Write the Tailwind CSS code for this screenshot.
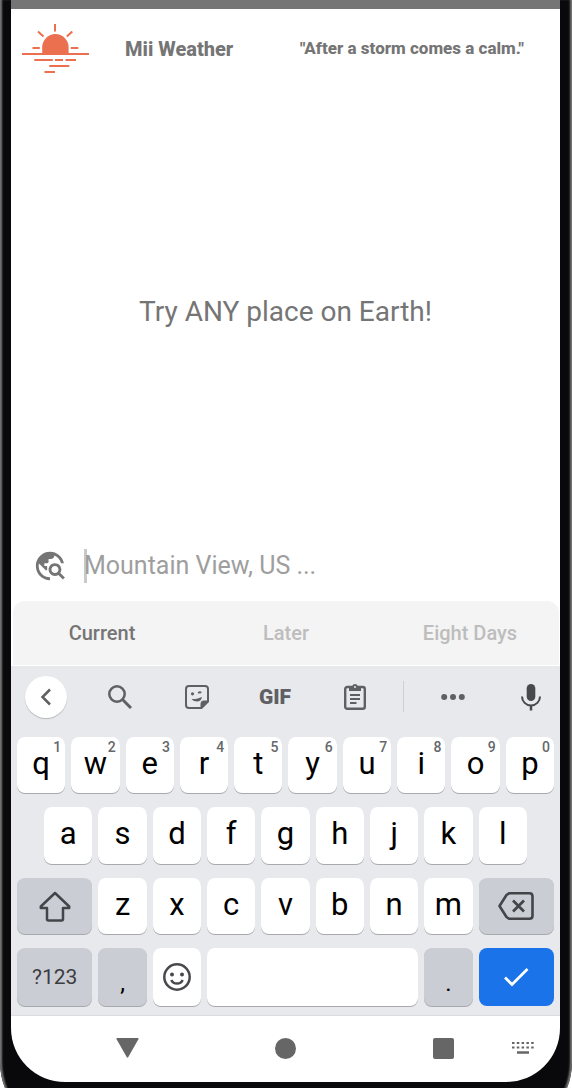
<!DOCTYPE html>
<html lang="en">
<head>
<meta charset="utf-8">
<meta name="viewport" content="width=device-width, initial-scale=1">
<title>Mii Weather</title>
<script src="https://cdn.jsdelivr.net/npm/@tailwindcss/browser@4"></script>
</head>
<body class="h-screen overflow-hidden bg-white font-['Roboto',sans-serif]">
<div class="h-[calc(100vh+44px)] rounded-b-[70px] bg-[#09090b] shadow-[inset_3px_0_2px_-1px_#777,inset_-3px_0_2px_-1px_#777]">
<div class="mr-3 ml-[11px] flex h-[calc(100vh-6px)] flex-col overflow-hidden rounded-b-[54px] bg-white">
  <div class="h-[9px] shrink-0 bg-[#757575]"></div>

  <header class="flex h-20 shrink-0 items-center pr-9 pl-[11px] text-[#757575]">
    <svg class="h-[51px] w-[67px] shrink-0" viewBox="22 24 67 51" fill="none" stroke="#ea7050" stroke-width="2" aria-hidden="true">
      <path d="M42.2 54V47.3a13.2 13.2 0 0 1 26.4 0V54z" fill="#ea7050" stroke="none"/>
      <path d="M55 23.5v8M38 31.5l5.500 5M72.300 31.500l-5.500 5M32.500 48h7.300M70.800 48h7.500M22 54h67M34.300 60h18.500M55 60h8M65.500 60h10.500M49.300 66h20M44.500 72h10.500"/>
    </svg>
    <h1 class="ml-9 text-xl font-extrabold">Mii Weather</h1>
    <p class="ml-auto text-[17px] font-extrabold whitespace-nowrap">"After a storm comes a calm."</p>
  </header>

  <main class="flex min-h-0 flex-1 items-center justify-center pt-1 text-[28px] text-[#757575]">
    <p>Try ANY place on Earth!</p>
  </main>

  <form class="flex h-[70px] shrink-0 items-center pl-[22px]">
    <svg class="size-[34px] shrink-0" viewBox="0 0 24 24" fill="#757575" aria-hidden="true"><path d="M19.3 16.9c.4-.7.7-1.5.7-2.4 0-2.5-2-4.5-4.500-4.500S11 12 11 14.500s2 4.500 4.500 4.500c.9 0 1.700-.3 2.400-.7l3.200 3.200 1.400-1.400-3.200-3.200zm-3.800.1c-1.400 0-2.500-1.100-2.500-2.500s1.100-2.500 2.500-2.500 2.500 1.100 2.500 2.500-1.100 2.500-2.500 2.500zM12 20v2C6.480 22 2 17.520 2 12S6.480 2 12 2c4.840 0 8.870 3.440 9.800 8h-2.070A8 8 0 0 0 15 4.590V5c0 1.100-.9 2-2 2h-2v2c0 .55-.45 1-1 1H8v2h2v3H9l-4.790-4.790C4.080 10.790 4 11.380 4 12c0 4.410 3.590 8 8 8z"/></svg>
    <div class="relative ml-[17px] flex-1">
      <span class="absolute inset-y-0 left-0 w-[3px] bg-[#c9c9c9]"></span>
      <input type="text" aria-label="Place" placeholder="Mountain View, US ..." class="relative block h-[34px] w-full bg-transparent text-[25px] text-[#757575] outline-none placeholder:text-[#9e9e9e]">
    </div>
  </form>

  <nav class="mx-0.5 mr-px grid h-16 shrink-0 grid-cols-[89fr_95fr_89fr] rounded-t-xl bg-[#f4f4f4] text-xl font-medium text-[#bdbdbd]" aria-label="Forecast">
    <button type="button" class="text-[#757575]">Current</button>
    <button type="button">Later</button>
    <button type="button">Eight Days</button>
  </nav>

  <section class="mt-px h-[350px] shrink-0 border-b border-[#dcdcdf] bg-[#e8e9ed]" aria-label="Keyboard">
    <div class="grid h-[61px] grid-cols-[70fr_77fr_78fr_78fr_89fr_1px_98fr_58fr] items-center justify-items-center text-[#5f6063]">
      <button type="button" aria-label="Back" class="grid size-[42px] place-items-center rounded-full bg-white shadow-[0_1px_1px_#b5b6ba]">
        <svg class="size-6" viewBox="0 0 24 24" fill="none" stroke="currentColor" stroke-width="2.500"><path d="M16 4.500 8.500 12l7.500 7.500"/></svg>
      </button>
      <button type="button" aria-label="Search">
        <svg class="size-6" viewBox="0 0 24 24" fill="none" stroke="currentColor"><circle cx="9" cy="9" r="7.700" stroke-width="2.500"/><path d="m14.500 14.500 8.500 8.500" stroke-width="3"/></svg>
      </button>
      <button type="button" aria-label="Stickers">
        <svg class="size-6" viewBox="0 0 24 24" fill="none" stroke="currentColor" stroke-width="2"><path d="M4 1h16a3 3 0 0 1 3 3v12.500L16.500 23H4a3 3 0 0 1-3-3V4a3 3 0 0 1 3-3z"/><path d="M23 16h-4.500a2.500 2.500 0 0 0-2.500 2.500V23z" fill="currentColor" stroke-width="1"/><path d="M6.500 14c3.500.3 7.500-.5 10.500-2-.5 3-2.500 4.500-5 4.500-2.200 0-4-.8-5.500-2.500z" fill="currentColor" stroke="none"/><circle cx="7.500" cy="8.800" r="1.600" fill="currentColor" stroke="none"/><path d="M12.700 7.500c1-1.400 2.800-1.700 4-.4l-.6 1.200-3 .3z" fill="currentColor" stroke="none"/></svg>
      </button>
      <button type="button" class="text-[21px] leading-6 font-black">GIF</button>
      <button type="button" aria-label="Clipboard" class="mr-2">
        <svg class="h-[27px] w-[22px]" viewBox="0 0 22 27" fill="none" stroke="currentColor"><rect x="1.200" y="4" width="19.600" height="21.800" rx="2" stroke-width="2.400"/><path d="M5 3h3.200a3 3 0 0 1 5.600 0H17v5H5z" fill="currentColor" stroke="none"/><circle cx="11" cy="4" r="1" fill="#e8e9ed" stroke="none"/><path d="M6 12h10M6 16h10M6 20h6.500" stroke-width="2"/></svg>
      </button>
      <span class="h-[31px] w-px bg-[#cfd0d4]"></span>
      <button type="button" aria-label="More">
        <svg class="h-2 w-6" viewBox="0 0 24 8" fill="currentColor"><circle cx="3.200" cy="4" r="3"/><circle cx="12" cy="4" r="3"/><circle cx="20.800" cy="4" r="3"/></svg>
      </button>
      <button type="button" aria-label="Voice input" class="text-[#48494c]">
        <svg class="h-7 w-5" viewBox="0 0 20 28" fill="none" stroke="currentColor" stroke-width="2"><rect x="5.700" y="1" width="8.600" height="17" rx="4.300" fill="currentColor" stroke="none"/><path d="M1 13.500a9 9 0 0 0 18 0"/><path d="M10 22v5.500" stroke-width="2.500"/></svg>
      </button>
    </div>

    <div class="mx-1.5 mt-2.5 grid grid-cols-20 grid-rows-[56px_57px_56px_58px] gap-x-1.5 gap-y-3.5 text-[31px] leading-none text-black *:relative *:col-span-2 *:rounded-lg *:bg-white *:pb-1 *:shadow-[0_1px_0_#a8a9ad]">
      <button type="button">q<sup class="absolute top-[3px] right-1 text-sm leading-none font-medium text-[#66676a]">1</sup></button>
      <button type="button">w<sup class="absolute top-[3px] right-1 text-sm leading-none font-medium text-[#66676a]">2</sup></button>
      <button type="button">e<sup class="absolute top-[3px] right-1 text-sm leading-none font-medium text-[#66676a]">3</sup></button>
      <button type="button">r<sup class="absolute top-[3px] right-1 text-sm leading-none font-medium text-[#66676a]">4</sup></button>
      <button type="button">t<sup class="absolute top-[3px] right-1 text-sm leading-none font-medium text-[#66676a]">5</sup></button>
      <button type="button">y<sup class="absolute top-[3px] right-1 text-sm leading-none font-medium text-[#66676a]">6</sup></button>
      <button type="button">u<sup class="absolute top-[3px] right-1 text-sm leading-none font-medium text-[#66676a]">7</sup></button>
      <button type="button">i<sup class="absolute top-[3px] right-1 text-sm leading-none font-medium text-[#66676a]">8</sup></button>
      <button type="button">o<sup class="absolute top-[3px] right-1 text-sm leading-none font-medium text-[#66676a]">9</sup></button>
      <button type="button">p<sup class="absolute top-[3px] right-1 text-sm leading-none font-medium text-[#66676a]">0</sup></button>

      <button type="button" class="col-start-2!">a</button>
      <button type="button">s</button>
      <button type="button">d</button>
      <button type="button">f</button>
      <button type="button">g</button>
      <button type="button">h</button>
      <button type="button">j</button>
      <button type="button">k</button>
      <button type="button">l</button>

      <button type="button" aria-label="Shift" class="col-[1/span_3]! grid place-items-center bg-[#cbcdd5]! pb-0!">
        <svg class="h-[31px] w-8" viewBox="0 0 32 31" fill="none" stroke="#444548" stroke-width="2.500" stroke-linejoin="round"><path d="M16 2 1.800 15.500v1.500H8v11q0 1.500 1.500 1.500h13q1.500 0 1.500-1.500V17h6.200v-1.500z"/></svg>
      </button>
      <button type="button">z</button>
      <button type="button">x</button>
      <button type="button">c</button>
      <button type="button">v</button>
      <button type="button">b</button>
      <button type="button">n</button>
      <button type="button">m</button>
      <button type="button" aria-label="Backspace" class="col-span-3! grid place-items-center bg-[#cbcdd5]! pb-0!">
        <svg class="h-7 w-9" viewBox="0 0 36 28" fill="none" stroke="#444548" stroke-width="2.600" stroke-linejoin="round"><path d="M11 1.300h20.500q3 0 3 3v19.400q0 3-3 3H11L8.500 25 1.500 14l7-11z"/><path d="m15 8.500 11 11m0-11-11 11" stroke-width="2.700"/></svg>
      </button>

      <button type="button" class="col-span-3! bg-[#cbcdd5]! pb-0! text-[21px] text-[#3c3d40]">?123</button>
      <button type="button" class="bg-[#cbcdd5]! pt-3! pb-0! text-2xl">,</button>
      <button type="button" aria-label="Emoji" class="grid place-items-center pb-0!">
        <svg class="size-[30px]" viewBox="0 0 30 30" fill="none" stroke="#48494c" stroke-width="2.500"><circle cx="15" cy="15" r="12.700"/><circle cx="10" cy="12.500" r="2" fill="#48494c" stroke="none"/><circle cx="20" cy="12.500" r="2" fill="#48494c" stroke="none"/><path d="M9.300 18a6.300 6.300 0 0 0 11.400 0"/></svg>
      </button>
      <button type="button" aria-label="Space" class="col-span-8!"></button>
      <button type="button" class="bg-[#cbcdd5]! pt-3! pb-0! text-2xl">.</button>
      <button type="button" aria-label="Done" class="col-span-3! grid place-items-center bg-[#1a73e8]! pb-0! shadow-none!">
        <svg class="h-5 w-[26px]" viewBox="0 0 26 20" fill="none" stroke="#fff" stroke-width="2.700"><path d="m2 10.500 7 7L24.500 2"/></svg>
      </button>
    </div>
  </section>

  <nav class="grid h-[66px] shrink-0 grid-cols-[105fr_159fr_158fr_79fr_48fr] items-center pb-0.5 text-[#666]" aria-label="System">
    <button type="button" aria-label="Hide keyboard" class="col-start-2">
      <svg class="h-5 w-[23px]" viewBox="0 0 23 20" fill="currentColor"><path d="M1.200 0h20.600q1.200 0 .6 1.200L12.300 19q-.8 1.300-1.600 0L.6 1.200Q0 0 1.200 0z"/></svg>
    </button>
    <button type="button" aria-label="Home"><span class="block size-[21px] rounded-full bg-current"></span></button>
    <button type="button" aria-label="Recents"><span class="block size-[21px] rounded-xs bg-current"></span></button>
    <button type="button" aria-label="Switch keyboard">
      <svg class="h-3 w-[22px]" viewBox="0 0 22 12" fill="none" stroke="currentColor" stroke-width="2"><path d="M0 1h22M0 5.500h22" stroke-dasharray="2.500 2.300"/><path d="M5 10.500h12" stroke-width="2.500"/></svg>
    </button>
  </nav>
</div>
</div>
</body>
</html>
